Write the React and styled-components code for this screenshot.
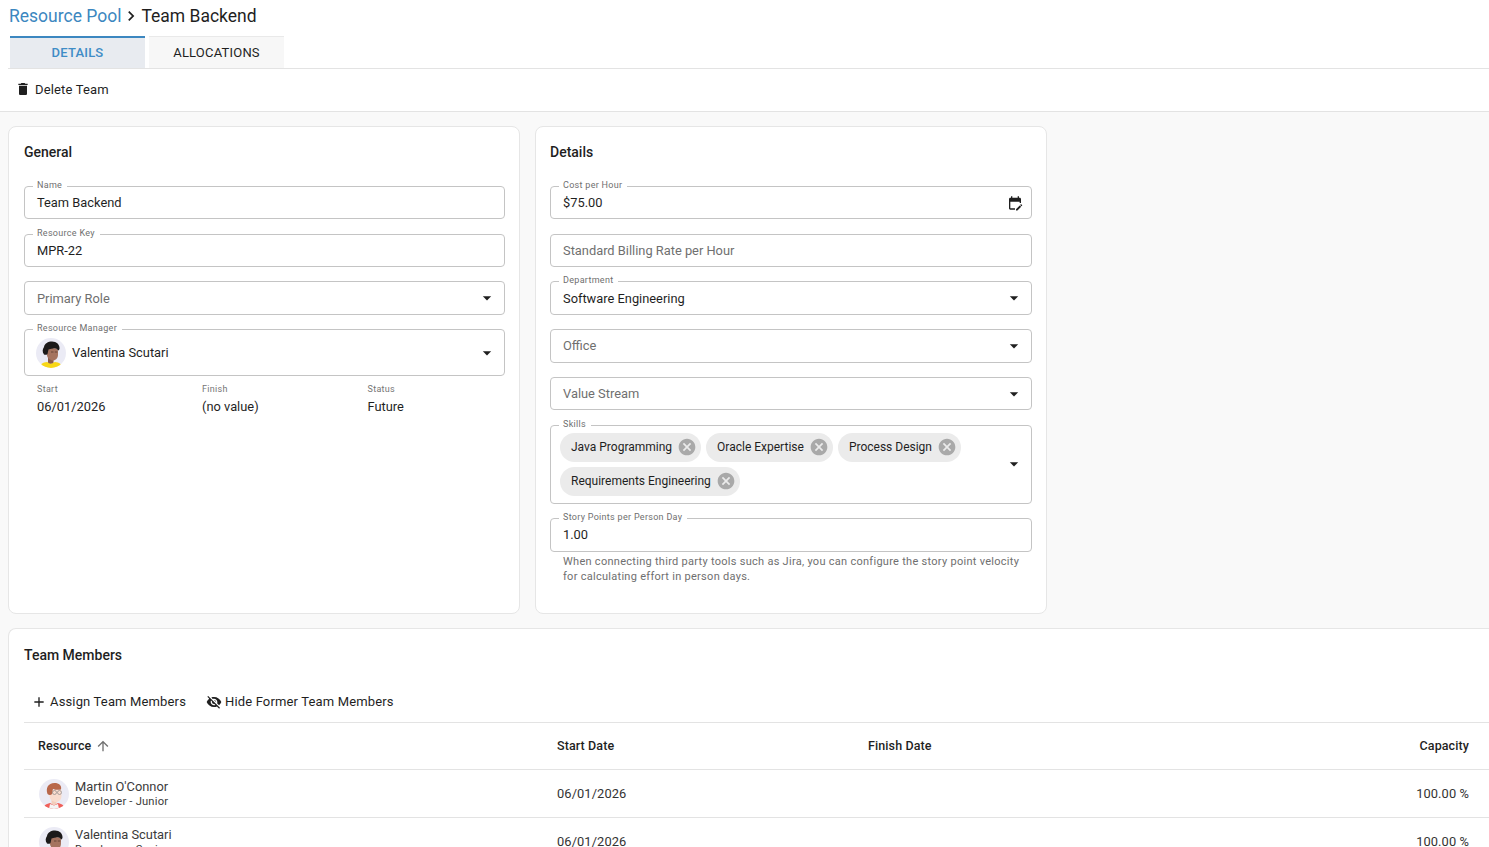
import React from "react";
import styled, { createGlobalStyle } from "styled-components";

const GlobalStyle = createGlobalStyle`
  html, body {
    margin: 0;
    height: 100%;
    overflow: hidden;
    background: #fff;
  }
  body {
    font-family: Roboto, "Liberation Sans", sans-serif;
    color: #1f1f1f;
  }
  * { box-sizing: border-box; }
`;

const Page = styled.div`
  width: 1489px;
  height: 847px;
  overflow: hidden;
  display: flex;
  flex-direction: column;
`;

const Breadcrumb = styled.div`
  flex: none;
  display: flex;
  align-items: center;
  height: 32px;
  padding: 0 0 1px 9px;
  font-size: 17.5px;
`;

const CrumbLink = styled.span`
  color: #3c87c0;
`;

const TabBar = styled.div`
  flex: none;
  display: flex;
  gap: 4px;
  margin-left: 8px;
  padding: 4px 0 0 2px;
  height: 37px;
  border-bottom: 1px solid #e3e3e3;
`;

const Tab = styled.div`
  width: 135px;
  height: 32px;
  display: flex;
  align-items: center;
  justify-content: center;
  padding-bottom: ${(p) => (p.$active ? 2 : 0)}px;
  font-size: 13px;
  letter-spacing: 0.2px;
  border-top: ${(p) => (p.$active ? "2px solid #3c87c0" : "1px solid #e9e9e9")};
  background: ${(p) => (p.$active ? "#e8ebf0" : "#f7f7f7")};
  color: ${(p) => (p.$active ? "#3f8cc6" : "#1f1f1f")};
  font-weight: ${(p) => (p.$active ? 500 : 400)};
`;

const Toolbar = styled.div`
  height: 43px;
  display: flex;
  align-items: center;
  padding: 0 0 2px 15px;
  border-bottom: 1px solid #e3e3e3;
  flex: none;
`;

const ActionButton = styled.div`
  display: flex;
  align-items: center;
  gap: ${(p) => p.$gap || 4}px;
  font-size: 13px;
  letter-spacing: 0.15px;
  color: #1f1f1f;
  white-space: nowrap;
`;

const Content = styled.div`
  flex: 1;
  min-height: 0;
  background: #f9f9f9;
  padding: 14px 0 0 8px;
  display: flex;
  flex-direction: column;
  gap: 14px;
`;

const CardRow = styled.div`
  flex: none;
  display: flex;
  gap: 15px;
`;

const Card = styled.section`
  width: 512px;
  height: 488px;
  background: #fff;
  border: 1px solid #e6e6e6;
  border-radius: 8px;
  padding: 16px 14px 0 ${(p) => p.$padLeft}px;
`;

const SectionTitle = styled.h2`
  margin: 0 0 25px;
  font-size: 14px;
  line-height: 18px;
  font-weight: 500;
  color: #1f1f1f;
`;

const FieldStack = styled.div`
  display: flex;
  flex-direction: column;
  gap: 14.35px;
`;

const FieldBox = styled.div`
  position: relative;
  min-height: ${(p) => p.$height || 33.4}px;
  display: flex;
  align-items: center;
  justify-content: space-between;
  padding: 0 ${(p) => p.$padRight ?? 7}px 0 12px;
  border: 1px solid #c4c4c4;
  border-radius: 4px;
  background: #fff;
  font-size: 12.85px;
  color: #1f1f1f;
`;

const FloatLabel = styled.span`
  position: absolute;
  top: -8px;
  left: 8px;
  padding: 0 5px 0 4px;
  background: #fff;
  font-size: 9px;
  line-height: 12px;
  letter-spacing: 0.3px;
  color: #6f6f6f;
  white-space: nowrap;
`;

const Placeholder = styled.span`
  color: #6f6f6f;
`;

const PersonValue = styled.div`
  display: flex;
  align-items: center;
  gap: 6px;
  margin-left: -1px;
`;

const InfoGrid = styled.div`
  display: grid;
  grid-template-columns: 165px 165.5px 1fr;
  padding: 7px 0 0 13px;
  margin-top: -14.35px;
`;

const InfoLabel = styled.div`
  font-size: 9px;
  line-height: 13px;
  letter-spacing: 0.3px;
  color: #757575;
`;

const InfoValue = styled.div`
  margin-top: 2px;
  font-size: 12.85px;
  line-height: 18px;
`;

const ChipWrap = styled.div`
  display: flex;
  flex-wrap: wrap;
  gap: 5px;
  width: 440px;
  margin-left: -3px;
`;

const Chip = styled.span`
  height: 29px;
  display: inline-flex;
  align-items: center;
  gap: 5px;
  padding: 0 4px 0 11px;
  border-radius: 15px;
  background: #ebebeb;
  font-size: 12px;
  color: #1f1f1f;
`;

const HelpText = styled.p`
  margin: -12px 0 0;
  padding: 0 13px;
  font-size: 11px;
  line-height: 15px;
  letter-spacing: 0.28px;
  color: #6f6f6f;
  white-space: nowrap;
`;

const MembersCard = styled.section`
  width: 1481px;
  flex: 1;
  background: #fff;
  border: 1px solid #e6e6e6;
  border-right: none;
  border-radius: 8px 0 0 0;
  padding: 17px 0 0 15px;
`;

const MembersTitle = styled(SectionTitle)`
  margin-bottom: 17px;
`;

const MemberActions = styled.div`
  display: flex;
  align-items: center;
  gap: 20px;
  height: 41px;
  padding-left: 7px;
`;

const TableRow = styled.div`
  display: grid;
  grid-template-columns: 519px 311px 1fr 200px;
  align-items: center;
  height: ${(p) => (p.$head ? 47 : 48)}px;
  padding-bottom: ${(p) => (p.$head ? 1 : 0)}px;
  border-top: 1px solid #e3e3e3;
  font-size: 12.85px;
  letter-spacing: 0.1px;
  color: #333;
`;

const HeadCell = styled.div`
  display: flex;
  align-items: center;
  gap: 4px;
  padding-left: 14px;
  font-size: 12.5px;
  font-weight: 500;
  color: #1f1f1f;
  justify-content: ${(p) => (p.$right ? "flex-end" : "flex-start")};
  padding-right: ${(p) => (p.$right ? "20px" : "0")};
`;

const Cell = styled.div`
  padding-left: 14px;
  padding-right: ${(p) => (p.$right ? "20px" : "0")};
  text-align: ${(p) => (p.$right ? "right" : "left")};
`;

const ResourceCell = styled.div`
  display: flex;
  align-items: center;
  gap: 6px;
  padding-left: 15px;
`;

const ResourceText = styled.div`
  padding-top: 1px;
`;

const ResourceName = styled.div`
  font-size: 12.85px;
  line-height: 15px;
  letter-spacing: 0;
  color: #3a3a3a;
`;

const ResourceRole = styled.div`
  font-size: 11.2px;
  line-height: 15px;
  letter-spacing: 0.2px;
  color: #3a3a3a;
`;

const Icon = ({ d, size = 24, color = "#1f1f1f" }) => (
  <svg width={size} height={size} viewBox="0 0 24 24" fill={color} style={{ flex: "none" }}>
    <path d={d} />
  </svg>
);

const ICONS = {
  chevron: "M10 6L8.59 7.41 13.17 12l-4.58 4.59L10 18l6-6z",
  trash: "M6 19c0 1.1.9 2 2 2h8c1.1 0 2-.9 2-2V7H6v12zM19 4h-3.5l-1-1h-5l-1 1H5v2h14V4z",
  calendar:
    "M5 10h14v2h2V6c0-1.1-.9-2-2-2h-1V2h-2v2H8V2H6v2H5c-1.1 0-2 .9-2 2v14c0 1.1.9 2 2 2h7v-2H5V10zM22.5 16.28l-.7.7-2.12-2.12.71-.71c.39-.39 1.02-.39 1.41 0l.71.71c.38.39.38 1.03-.01 1.42zM19.12 15.59 13.5 21.2v2.1h2.12l5.62-5.62-2.12-2.09z",
  drop: "M7 10l5 5 5-5z",
  cancel:
    "M12 2C6.47 2 2 6.47 2 12s4.47 10 10 10 10-4.47 10-10S17.53 2 12 2zm5 13.59L15.59 17 12 13.41 8.41 17 7 15.59 10.59 12 7 8.41 8.41 7 12 10.59 15.59 7 17 8.41 13.41 12 17 15.59z",
  plus: "M19 13h-6v6h-2v-6H5v-2h6V5h2v6h6v2z",
  eyeOff:
    "M12 7c2.76 0 5 2.24 5 5 0 .65-.13 1.26-.36 1.83l2.92 2.92c1.51-1.26 2.7-2.89 3.43-4.75-1.73-4.39-6-7.5-11-7.5-1.4 0-2.74.25-3.98.7l2.16 2.16C10.74 7.13 11.35 7 12 7zM2 4.27l2.28 2.28.46.46C3.08 8.3 1.78 10.02 1 12c1.73 4.39 6 7.5 11 7.5 1.55 0 3.03-.3 4.38-.84l.42.42L19.73 22 21 20.73 3.27 3 2 4.27zM7.53 9.8l1.55 1.55c-.05.21-.08.43-.08.65 0 1.66 1.34 3 3 3 .22 0 .44-.03.65-.08l1.55 1.55c-.67.33-1.41.53-2.2.53-2.76 0-5-2.24-5-5 0-.79.2-1.53.53-2.2zm4.31-.78l3.15 3.15.02-.16c0-1.66-1.34-3-3-3l-.17.01z",
  arrowUp: "M4 12l1.41 1.41L11 7.83V20h2V7.83l5.58 5.59L20 12l-8-8-8 8z",
};

// little cartoon faces, one per person
const ValentinaAvatar = ({ id = "val" }) => (
  <svg width="30" height="30" viewBox="0 0 30 30" style={{ flex: "none" }}>
    <defs>
      <clipPath id={id}>
        <circle cx="15" cy="15" r="15" />
      </clipPath>
    </defs>
    <g clipPath={`url(#${id})`}>
      <rect width="30" height="30" fill="#ebebf5" />
      <path d="M3 30c1-4 4-5.500 8-6l4 1.500 4-1.500c4 .5 7 2 8 6z" fill="#f8d716" />
      <path d="M12 19h5.500v5.500c-1 1.500-4.500 1.500-5.500 0z" fill="#8a5a48" />
      <path d="M11 13c0-2 2-3 5.500-3s5.500 1 5.500 3v4c0 3-2.500 5.500-5 5.500S11 20 11 17z" fill="#a5735f" />
      <path d="M8 16.500c-2-2.500-1.500-5.500 0-7.500C8.500 5.500 12 3.500 16 3.500c4.500 0 8 3 7.500 7.500-.5 1-1 1.500-1.500 1.500-1-2-3-2.500-5-2-2 .5-3.500.5-4.500 1-.5 1.500-.5 3-1 4.500-.8 1-2.500 1-3.500.5z" fill="#1c1a1a" />
      <path d="M15 14h2.500M18.800 14h2.500" stroke="#4d3028" strokeWidth=".7" />
    </g>
  </svg>
);

const MartinAvatar = ({ id = "mar" }) => (
  <svg width="30" height="30" viewBox="0 0 30 30" style={{ flex: "none" }}>
    <defs>
      <clipPath id={id}>
        <circle cx="15" cy="15" r="15" />
      </clipPath>
    </defs>
    <g clipPath={`url(#${id})`}>
      <rect width="30" height="30" fill="#ebebf5" />
      <path d="M4 30c.5-3 2.500-5 7-6l4 2 4-2c4.500 1 6.500 3 7 6z" fill="#f0605a" />
      <path d="M11 25l4 1.500 4-1.500 1 5H10z" fill="#f4f4f4" />
      <path d="M12.500 18h5v7c-1 1-4 1-5 0z" fill="#f3cdbb" />
      <path d="M10.500 11h12v6c0 3.500-2.500 6-5.500 6s-6.500-2.500-6.500-6z" fill="#f8dccd" />
      <path d="M8.500 15c-2-6 .5-11 7-11 4.500 0 7.500 2.500 6.500 6.500-2.500.5-6 .5-8-.5-.5 1-.5 3-1 5-1 1.200-3 1.200-4.500 0z" fill="#b8674a" />
      <circle cx="15.500" cy="13.500" r="2" fill="none" stroke="#7d7d7d" strokeWidth=".6" />
      <circle cx="20.500" cy="13.500" r="2" fill="none" stroke="#7d7d7d" strokeWidth=".6" />
    </g>
  </svg>
);

const Text = ({ label, value, placeholder, padRight, children }) => (
  <FieldBox $padRight={padRight}>
    {label && <FloatLabel>{label}</FloatLabel>}
    {placeholder ? <Placeholder>{placeholder}</Placeholder> : <span>{value}</span>}
    {children}
  </FieldBox>
);

const DropField = ({ label, value, placeholder }) => (
  <Text label={label} value={value} placeholder={placeholder}>
    <Icon d={ICONS.drop} size={20} />
  </Text>
);

const SkillChip = ({ children }) => (
  <Chip>
    {children}
    <Icon d={ICONS.cancel} size={20} color="#a9a9a9" />
  </Chip>
);

const members = [
  { name: "Martin O'Connor", role: "Developer - Junior", Avatar: MartinAvatar },
  { name: "Valentina Scutari", role: "Developer - Senior", Avatar: ValentinaAvatar },
];

export default function App() {
  return (
    <Page>
      <GlobalStyle />
      <Breadcrumb>
        <CrumbLink>Resource Pool</CrumbLink>
        <Icon d={ICONS.chevron} size={20} />
        <span>Team Backend</span>
      </Breadcrumb>
      <TabBar>
        <Tab $active>DETAILS</Tab>
        <Tab>ALLOCATIONS</Tab>
      </TabBar>
      <Toolbar>
        <ActionButton>
          <Icon d={ICONS.trash} size={16} />
          Delete Team
        </ActionButton>
      </Toolbar>
      <Content>
        <CardRow>
          <Card $padLeft={15}>
            <SectionTitle>General</SectionTitle>
            <FieldStack>
              <Text label="Name" value="Team Backend" />
              <Text label="Resource Key" value="MPR-22" />
              <DropField placeholder="Primary Role" />
              <FieldBox $height={47}>
                <FloatLabel>Resource Manager</FloatLabel>
                <PersonValue>
                  <ValentinaAvatar id="managerClip" />
                  Valentina Scutari
                </PersonValue>
                <Icon d={ICONS.drop} size={20} />
              </FieldBox>
              <InfoGrid>
                <div>
                  <InfoLabel>Start</InfoLabel>
                  <InfoValue>06/01/2026</InfoValue>
                </div>
                <div>
                  <InfoLabel>Finish</InfoLabel>
                  <InfoValue>(no value)</InfoValue>
                </div>
                <div>
                  <InfoLabel>Status</InfoLabel>
                  <InfoValue>Future</InfoValue>
                </div>
              </InfoGrid>
            </FieldStack>
          </Card>
          <Card $padLeft={14}>
            <SectionTitle>Details</SectionTitle>
            <FieldStack>
              <Text label="Cost per Hour" value="$75.00" padRight={8}>
                <Icon d={ICONS.calendar} size={16} />
              </Text>
              <Text placeholder="Standard Billing Rate per Hour" />
              <DropField label="Department" value="Software Engineering" />
              <DropField placeholder="Office" />
              <DropField placeholder="Value Stream" />
              <FieldBox $height={79.25}>
                <FloatLabel>Skills</FloatLabel>
                <ChipWrap>
                  <SkillChip>Java Programming</SkillChip>
                  <SkillChip>Oracle Expertise</SkillChip>
                  <SkillChip>Process Design</SkillChip>
                  <SkillChip>Requirements Engineering</SkillChip>
                </ChipWrap>
                <Icon d={ICONS.drop} size={20} />
              </FieldBox>
              <Text label="Story Points per Person Day" value="1.00" />
              <HelpText>
                When connecting third party tools such as Jira, you can configure the story point velocity
                <br />
                for calculating effort in person days.
              </HelpText>
            </FieldStack>
          </Card>
        </CardRow>
        <MembersCard>
          <MembersTitle>Team Members</MembersTitle>
          <MemberActions>
            <ActionButton $gap={3}>
              <Icon d={ICONS.plus} size={16} />
              Assign Team Members
            </ActionButton>
            <ActionButton $gap={3}>
              <Icon d={ICONS.eyeOff} size={16} />
              Hide Former Team Members
            </ActionButton>
          </MemberActions>
          <TableRow $head>
            <HeadCell>
              Resource
              <Icon d={ICONS.arrowUp} size={16} color="#707070" />
            </HeadCell>
            <HeadCell>Start Date</HeadCell>
            <HeadCell>Finish Date</HeadCell>
            <HeadCell $right>Capacity</HeadCell>
          </TableRow>
          {members.map(({ name, role, Avatar }) => (
            <TableRow key={name}>
              <ResourceCell>
                <Avatar id={`${name.split(" ")[0]}Clip`} />
                <ResourceText>
                  <ResourceName>{name}</ResourceName>
                  <ResourceRole>{role}</ResourceRole>
                </ResourceText>
              </ResourceCell>
              <Cell>06/01/2026</Cell>
              <Cell />
              <Cell $right>100.00 %</Cell>
            </TableRow>
          ))}
        </MembersCard>
      </Content>
    </Page>
  );
}
